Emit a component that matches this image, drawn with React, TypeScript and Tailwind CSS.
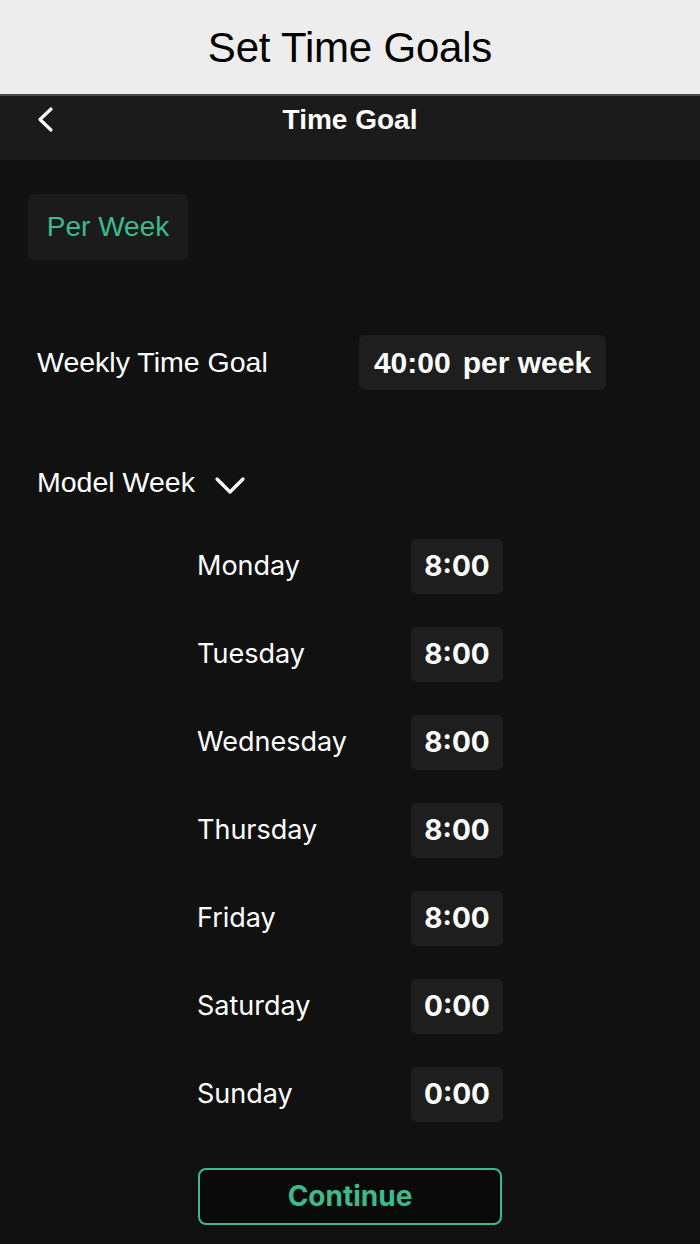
import React from "react";

const days = [
  { name: "Monday", time: "8:00" },
  { name: "Tuesday", time: "8:00" },
  { name: "Wednesday", time: "8:00" },
  { name: "Thursday", time: "8:00" },
  { name: "Friday", time: "8:00" },
  { name: "Saturday", time: "0:00" },
  { name: "Sunday", time: "0:00" },
];

export default function App() {
  return (
    <div className="flex h-[1244px] w-[700px] flex-col overflow-hidden bg-[#111111] font-['Liberation_Sans',sans-serif]">
      {/* page title */}
      <div className="flex h-[96px] shrink-0 items-center justify-center border-b-2 border-[#4a4a4a] bg-[#ededed]">
        <h1 className="text-[42px] font-normal tracking-[-0.2px] text-black">Set Time Goals</h1>
      </div>

      {/* nav bar */}
      <div className="relative flex h-[64px] shrink-0 items-start justify-center bg-[#1b1b1b] pt-[8px]">
        <button className="absolute left-[35px] top-[10px] text-white">
          <svg width="22" height="28" viewBox="0 0 22 28" fill="none">
            <path d="M16 3 L5 13.5 L16 24" stroke="white" strokeWidth="3.2" strokeLinecap="round" strokeLinejoin="round" />
          </svg>
        </button>
        <span className="text-[28px] font-bold leading-[32px] text-white">Time Goal</span>
      </div>

      <div className="flex flex-col px-[28px] pt-[34px]">
        <div className="flex">
          <button className="flex h-[66px] w-[160px] items-center justify-center rounded-[6px] bg-[#1b1b1b] text-[28px] text-[#3dba8a]">
            Per Week
          </button>
        </div>

        <div className="mt-[75px] flex items-center">
          <span className="ml-[9px] w-[322px] text-[28.5px] text-white">Weekly Time Goal</span>
          <div className="flex h-[55px] w-[247px] items-center justify-center gap-[12px] rounded-[6px] bg-[#1e1e1e] text-[30px] font-bold text-white">
            <span>40:00</span>
            <span>per week</span>
          </div>
        </div>

        <div className="ml-[9px] mt-[71px] flex items-center gap-[19px]">
          <span className="text-[28.5px] text-white">Model Week</span>
          <svg width="32" height="19" viewBox="0 0 32 19" fill="none" className="mt-[6px]">
            <path d="M3 3 L16 16 L29 3" stroke="white" strokeWidth="3.2" strokeLinecap="round" strokeLinejoin="round" />
          </svg>
        </div>

        <div className="mt-[35px] flex flex-col gap-[33px] pl-[169px]">
          {days.map((d) => (
            <div key={d.name} className="flex items-center">
              <span className="w-[214px] font-['Inter',sans-serif] text-[27px] text-white">{d.name}</span>
              <div className="flex h-[55px] w-[92px] items-center justify-center rounded-[6px] bg-[#1e1e1e] font-['Inter',sans-serif] text-[28px] font-bold text-white">
                {d.time}
              </div>
            </div>
          ))}
        </div>

        <div className="mt-[46px] pl-[170px]">
          <button className="flex h-[57px] w-[304px] items-center justify-center rounded-[8px] border-2 border-[#3dba8a] bg-[#0a0a0a] font-['Inter',sans-serif] text-[28px] font-bold text-[#3dba8a]">
            Continue
          </button>
        </div>
      </div>
    </div>
  );
}
